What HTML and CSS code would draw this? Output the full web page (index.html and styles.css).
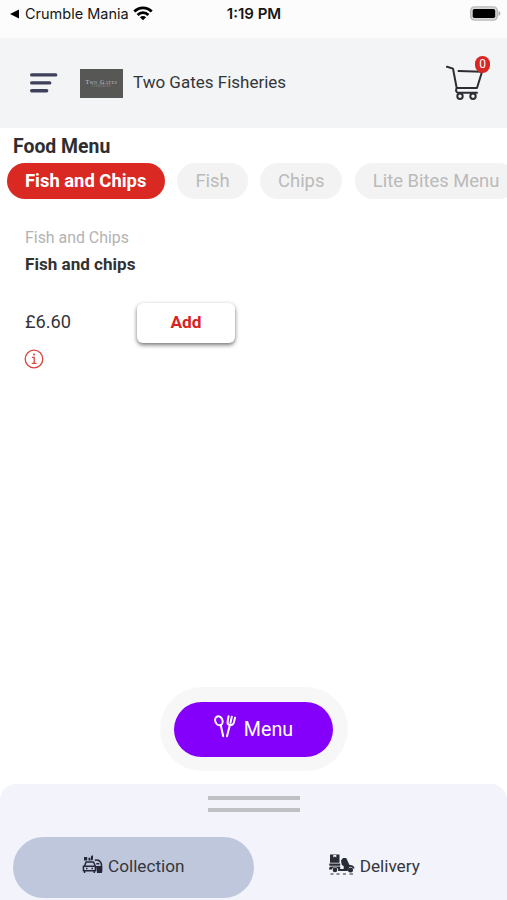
FILE: index.html
```html
<!DOCTYPE html>
<html lang="en">
<head>
<meta charset="utf-8">
<title>Two Gates Fisheries</title>
<link rel="stylesheet" href="styles.css">
</head>
<body>
<div class="app">
  <div class="status">
    <div class="status-left">
      <svg width="10" height="10" viewBox="0 0 10 10"><path d="M0 5 9 .6v8.8z" fill="#000"/></svg>
      <span class="back">Crumble Mania</span>
      <svg class="wifi" width="20" height="15" viewBox="0 0 20 15" fill="none" stroke="#000" stroke-width="2.800"><path d="M1.300 5.600c5-5 12.400-5 17.400 0M4.600 9c3.100-3.100 7.700-3.100 10.800 0"/><path d="M10 14.200 6.900 11.300c1.700-1.600 4.500-1.600 6.200 0z" fill="#000" stroke="none"/></svg>
    </div>
    <span class="time">1:19 PM</span>
    <svg class="battery" width="31" height="15" viewBox="0 0 31 15"><rect x=".7" y=".9" width="26.600" height="13.200" rx="3.800" fill="#d8d8d8" stroke="#b9b9b9" stroke-width="1.400"/><rect x="2.700" y="3" width="22.500" height="9" rx="1.800" fill="#000"/><path d="M28.500 5v5c2.500-1 2.500-4 0-5z" fill="#aaa"/></svg>
  </div>
  <header class="header">
    <svg class="burger" width="28" height="20" viewBox="0 0 28 20" stroke="#3f405b" stroke-width="3.400" stroke-linecap="round"><path d="M1.700 1.900h24M1.700 9.900h18M1.700 17.800h15"/></svg>
    <div class="logo"><span class="logo-name">Two Gates</span><span class="logo-sub">FISHERIES</span></div>
    <span class="shop">Two Gates Fisheries</span>
    <div class="cart">
      <svg width="38" height="36" viewBox="0 0 38 36" fill="none" stroke="#2e2c33" stroke-width="2" stroke-linecap="round" stroke-linejoin="round"><path d="M1 1.800 7 3.600 10.700 23H31l5-16.200-23.500-.8M10.700 23c-1.200 2.500-.6 4.700 1.500 4.700H31"/><circle cx="14" cy="31.300" r="2.700"/><circle cx="27" cy="31.300" r="2.700"/></svg>
      <span class="badge">0</span>
    </div>
  </header>
  <main class="main">
    <h1 class="title">Food Menu</h1>
    <nav class="tabs">
      <span class="tab active">Fish and Chips</span>
      <span class="tab">Fish</span>
      <span class="tab">Chips</span>
      <span class="tab">Lite Bites Menu</span>
    </nav>
    <section class="item">
      <div class="category">Fish and Chips</div>
      <h2 class="name">Fish and chips</h2>
      <div class="buy"><span class="price">£6.60</span><button class="add">Add</button></div>
      <svg class="info" width="20" height="20" viewBox="0 0 20 20" fill="none" stroke="#d9443f" stroke-width="1.300"><circle cx="10" cy="10" r="8.800"/><path d="M8 8.300h2.200v6M7.800 14.400h4.700"/><circle cx="10" cy="5.500" r="1" fill="#d9443f" stroke="none"/></svg>
    </section>
  </main>
  <div class="menu-ring">
    <button class="menu">
      <svg width="22" height="23" viewBox="0 0 22 23" fill="none" stroke="#fff" stroke-width="2" stroke-linecap="round" stroke-linejoin="round"><ellipse cx="4.900" cy="5.800" rx="3.600" ry="4.600" transform="rotate(-20 4.900 5.800)"/><path d="M6.800 10.200 9.200 21.200M14.600 1.300l-1 5.500c-.4 4 5 4.400 6.200.9l1.300-5.100M17.800 1.700l-1.300 6M15.800 10.200 13 21.200"/></svg>
      <span>Menu</span>
    </button>
  </div>
  <footer class="sheet">
    <div class="handle"></div>
    <div class="modes">
      <div class="mode selected">
        <svg width="21" height="19" viewBox="0 0 21 19" fill="none" stroke="#252638" stroke-width="1.500" stroke-linejoin="round"><path d="M2.600 11 4 7h7.500l1.800 4M1.400 11.300h12v4.400h-12zM2.500 16v2M12.300 16v2M4 13.500h1.500M9.500 13.500H11"/><path d="M2 2h3.200v3.500H2zM6.500 2.700h2v2.800h-2zM9 1l2-.7v4.500l-2 .7z" fill="#252638" stroke="none"/><path d="M12.800 5.200c4-.8 6.800 1.300 6.800 6v5.500"/><path d="M14 11h6v7h-5z" fill="#252638" stroke="none"/><path d="M14.300 8.700h3"/></svg>
        <span>Collection</span>
      </div>
      <div class="mode delivery">
        <svg width="26" height="21" viewBox="0 0 26 21" fill="#292b35"><path d="M1 .5h9.500v8.300H1zM.3 9.400h10.900v2.300H.3zM0 15.500c0-1.700.8-3 2.300-3h8.900v2.600h3.500v-2.800l-2-1.500L12 6.500l2-2.500h3.200l2.300 5 1.400 2.500-2.200 5.500H9.200a3.300 3.300 0 0 0-6.400-1.500z"/><path d="M18 13.800c1.200-2.500 5.500-2.800 6.800.7" fill="none" stroke="#292b35" stroke-width="1.700"/><circle cx="6" cy="15.900" r="2.300"/><circle cx="21.500" cy="16" r="2.500"/><path d="M4.300 1v2.500l1.500-1 1.500 1V1z" fill="#f2f3fb"/><path d="M1.500 20h3M7.500 20h3M14 20h3M20.500 20h3.500" stroke="#292b35"/></svg>
        <span>Delivery</span>
      </div>
    </div>
  </footer>
</div>
</body>
</html>
```
FILE: styles.css
```css
* { box-sizing: border-box; }
body { margin: 0; font-family: Roboto, "Liberation Sans", sans-serif; color: #35363a; background: #fff; }
button { font: inherit; border: 0; padding: 0; }
svg { display: block; flex: none; }
.app { width: 507px; height: 900px; display: flex; flex-direction: column; overflow: hidden; white-space: nowrap; }
.status { height: 38px; flex: none; background: #fcfcfc; display: grid; grid-template-columns: 1fr auto 1fr; padding: 0 6px 11px 10px; align-items: center; color: #161616; }
.status-left { display: flex; align-items: center; }
.back { font-family: Inter, Roboto, sans-serif; font-size: 14.5px; margin-left: 5px; width: 103px; }
.wifi { margin-left: 5px; margin-top: -1px; }
.time { font-family: Inter, Roboto, sans-serif; font-size: 15px; font-weight: 600; margin-right: 3px; }
.battery { justify-self: end; }
.header { height: 90px; flex: none; background: #f2f4f6; display: flex; align-items: center; padding: 0 23px 0 30px; }
.logo { width: 43px; height: 29px; margin-left: 22px; background: #575756; color: #c9c9c9; display: flex; flex-direction: column; align-items: center; justify-content: center; font-family: "Liberation Serif", serif; line-height: 1; }
.logo-name { font-size: 6px; font-variant: small-caps; letter-spacing: .7px; }
.logo-sub { font-size: 3px; letter-spacing: .5px; color: #929292; }
.burger { margin-bottom: 1px; }
.shop { font-size: 17px; margin-left: 10px; margin-bottom: 2px; }
.cart { position: relative; margin-left: auto; }
.badge { position: absolute; right: -6px; top: -9px; width: 15px; height: 17px; border-radius: 8px; background: #d92524; color: #fff; font-size: 12px; line-height: 17px; text-align: center; }
.main { flex: 1; min-height: 0; }
.title { margin: 0; padding: 7px 13px 0; height: 35px; font-size: 19.4px; line-height: 24px; font-weight: 700; color: #2e2e30; }
.tabs { display: flex; gap: 12.4px; padding-left: 7px; }
.tab { flex: none; height: 36px; padding: 0 18px; border-radius: 18px; background: #f3f3f3; color: #bababa; font-size: 18.4px; line-height: 35px; }
.active { width: 158px; background: #da2823; color: #fff; font-weight: 700; }
.item { padding: 28px 25px 0; }
.category { font-size: 15.9px; line-height: 22px; color: #b3b3b3; }
.name { margin: 4px 0 0; font-size: 17.1px; line-height: 22px; font-weight: 700; color: #323234; }
.buy { display: flex; align-items: center; margin-top: 28px; height: 40px; }
.price { width: 112px; font-size: 18.2px; margin-bottom: 3px; }
.add { width: 98px; height: 40px; padding-bottom: 2px; border-radius: 6px; background: #fff; color: #d8231e; font-size: 17.3px; font-weight: 700; box-shadow: 0 2px 4px rgba(0,0,0,.55); }
.info { margin-top: 6px; margin-left: -1px; }
.menu-ring { flex: none; align-self: center; width: 188px; height: 84px; margin-bottom: 13px; border-radius: 42px; background: #f7f7f7; display: flex; align-items: center; justify-content: center; }
.menu { width: 159px; height: 55px; border-radius: 28px; background: #8500fa; color: #fff; font-size: 19.7px; display: flex; align-items: center; justify-content: center; gap: 8px; }
.menu svg { margin-top: -6px; }
.sheet { flex: none; height: 116px; background: #f2f3fb; border-radius: 16px 16px 0 0; padding: 12px 13px 0; }
.handle { width: 92px; height: 16px; margin: 0 auto 25px; border: solid #bfc0c3; border-width: 4px 0; }
.modes { display: flex; }
.mode { width: 241px; height: 61px; padding-bottom: 3px; border-radius: 31px; display: flex; align-items: center; justify-content: center; gap: 5px; font-size: 17.2px; }
.selected { background: #bfc7dd; }
.selected svg { margin-top: -4px; }
.delivery { padding-left: 1px; }
.delivery svg { margin-top: -4px; }
```
